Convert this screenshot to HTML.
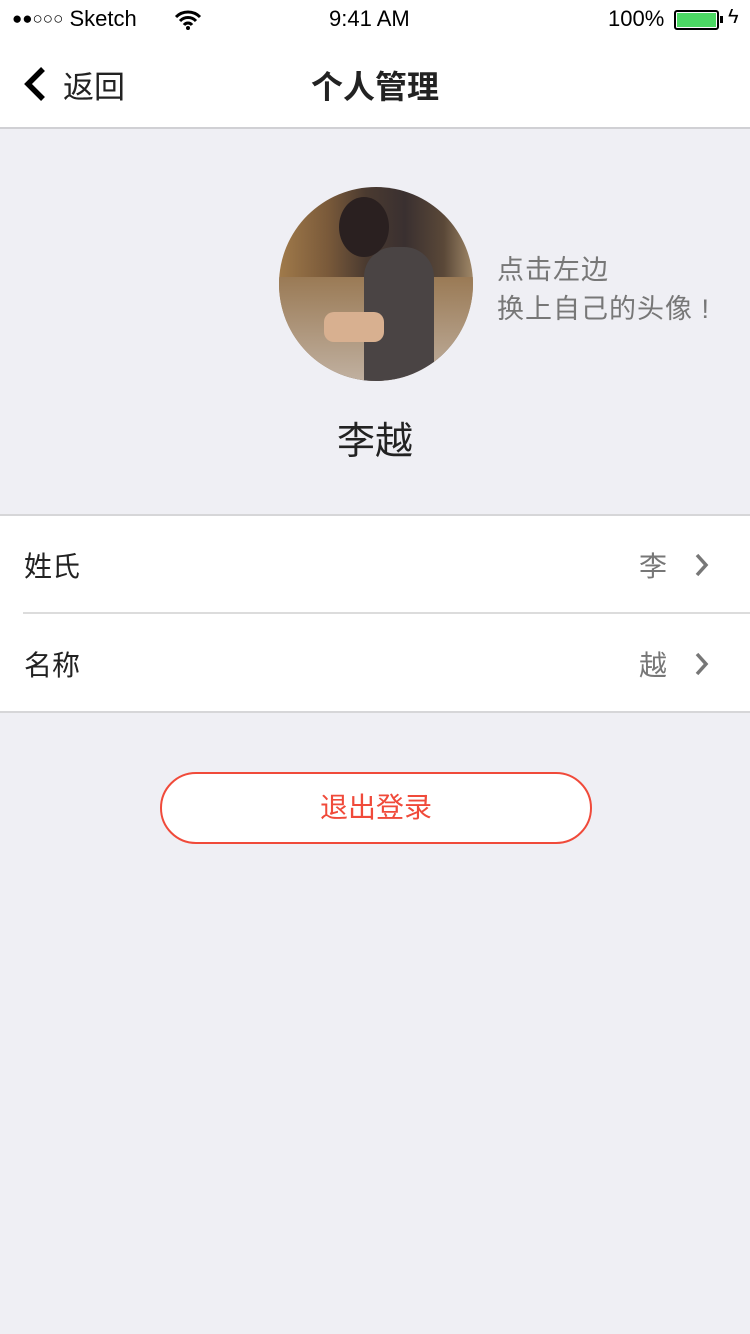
<!DOCTYPE html>
<html><head><meta charset="utf-8"><style>
*{margin:0;padding:0;box-sizing:border-box}
body{width:750px;height:1334px;background:#efeff4;font-family:"Liberation Sans","Noto Sans CJK SC",sans-serif;position:relative;overflow:hidden}
.abs{position:absolute}
</style></head><body>
<div class="abs" style="left:0;top:0;width:750px;height:129px;background:#fff;border-bottom:2px solid #d0d0d4"></div>
<div class="abs" style="left:12px;top:6px;font-size:22px;color:#000"><span style="font-size:17px;letter-spacing:0px;position:relative;top:-2px">●●○○○</span> Sketch</div>
<svg class="abs" style="left:174px;top:10px" width="28" height="20" viewBox="0 0 28 20"><path d="M2 7a17 17 0 0 1 24 0M6 11a11 11 0 0 1 16 0M10 15a5 5 0 0 1 8 0" stroke="#000" stroke-width="3" fill="none"/><circle cx="14" cy="18" r="2"/></svg>
<div class="abs" style="left:329px;top:6px;font-size:22px">9:41 AM</div>
<div class="abs" style="left:608px;top:6px;font-size:22px">100%</div>
<div class="abs" style="left:674px;top:10px;width:45px;height:20px;border:2px solid #000;border-radius:3px;padding:1px"><div style="width:100%;height:100%;background:#4cd964"></div></div>
<div class="abs" style="left:720px;top:16px;width:3px;height:7px;background:#000"></div>
<div class="abs" style="left:728px;top:6px;font-size:20px">ϟ</div>
<svg class="abs" style="left:22px;top:66px" width="26" height="36"><path d="M21 3L6 18L21 33" stroke="#000" stroke-width="5.5" fill="none"/></svg>
<div class="abs" style="left:63px;top:62px;font-size:31px;color:#222">返回</div>
<div class="abs" style="left:0;width:750px;top:62px;text-align:center;font-size:32px;font-weight:bold;color:#222">个人管理</div>
<div class="abs" style="left:279px;top:187px;width:194px;height:194px;border-radius:50%;overflow:hidden;background:linear-gradient(90deg,#a07a4a 0%,#7a5a3a 25%,#4a3a30 45%,#3a3030 65%,#5a4838 85%,#a08868 100%)">
<div class="abs" style="left:0;top:90px;width:194px;height:104px;background:linear-gradient(180deg,#9a7a55,#c0b0a0)"></div>
<div class="abs" style="left:85px;top:60px;width:70px;height:140px;background:#4a4444;border-radius:30px 30px 0 0"></div>
<div class="abs" style="left:60px;top:10px;width:50px;height:60px;background:#2a2020;border-radius:50%"></div>
<div class="abs" style="left:45px;top:125px;width:60px;height:30px;background:#d8b090;border-radius:10px"></div>
</div>
<div class="abs" style="left:497px;top:251px;font-size:27px;color:#777;line-height:39px;letter-spacing:1px">点击左边<br>换上自己的头像 !</div>
<div class="abs" style="left:0;width:750px;top:410px;text-align:center;font-size:38px;color:#222">李越</div>
<div class="abs" style="left:0;top:514px;width:750px;height:199px;background:#fff;border-top:2px solid #d6d6d8;border-bottom:2px solid #d6d6d8"></div>
<div class="abs" style="left:23px;top:612px;width:727px;height:2px;background:#dcdcdc"></div>
<div class="abs" style="left:24px;top:545px;font-size:28px;color:#222">姓氏</div>
<div class="abs" style="left:639px;top:545px;font-size:28px;color:#777">李</div>
<div class="abs" style="left:24px;top:644px;font-size:28px;color:#222">名称</div>
<div class="abs" style="left:639px;top:644px;font-size:28px;color:#777">越</div>
<svg class="abs" style="left:694px;top:552px" width="16" height="26"><path d="M3 3L12 13L3 23" stroke="#777" stroke-width="3.5" fill="none"/></svg>
<svg class="abs" style="left:694px;top:651px" width="16" height="26"><path d="M3 3L12 13L3 23" stroke="#777" stroke-width="3.5" fill="none"/></svg>
<div class="abs" style="left:160px;top:772px;width:432px;height:72px;border:2px solid #f04a3a;border-radius:36px;background:#fff;text-align:center;line-height:68px;font-size:28px;color:#f04a3a">退出登录</div>
</body></html>
